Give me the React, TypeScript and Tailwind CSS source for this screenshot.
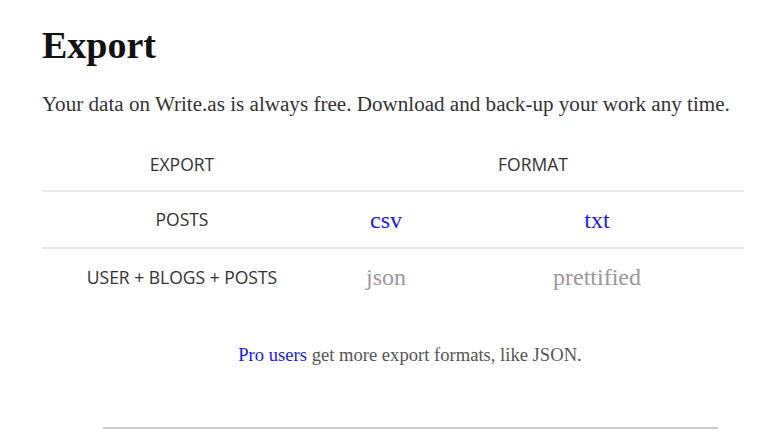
import React from "react";

export default function App() {
  const serif = { fontFamily: '"Liberation Serif", "DejaVu Serif", serif' };
  const sans = { fontFamily: '"Open Sans", "Noto Sans", sans-serif' };
  return (
    <div className="bg-white h-[441px] w-[768px] overflow-hidden flex flex-col" style={serif}>
      <div className="pl-[42px] pr-[24px]">
        <h1 className="pt-[22px] text-[38px] font-bold leading-[46px] text-[#111]">Export</h1>
        <p className="mt-[22px] text-[21.1px] leading-[28px] text-[#333] whitespace-nowrap">
          Your data on Write.as is always free. Download and back-up your work any time.
        </p>
        <table className="mt-[20px] w-[702px] border-collapse">
          <thead>
            <tr className="border-b-2 border-[#e8e8e8]">
              <th className="w-[280px] h-[53px] font-normal text-[17.5px] text-[#333] uppercase" style={sans}>Export</th>
              <th colSpan={2} className="h-[53px] font-normal text-[17.5px] text-[#333] uppercase" style={sans}>Format</th>
            </tr>
          </thead>
          <tbody>
            <tr className="border-b-2 border-[#e8e8e8]">
              <td className="h-[57px] text-center text-[17.5px] text-[#333]" style={sans}>POSTS</td>
              <td className="w-[128px] text-center text-[24px] text-[#1a1aee]">csv</td>
              <td className="text-center text-[24px] text-[#1a1aee]">txt</td>
            </tr>
            <tr>
              <td className="h-[57px] text-center text-[17.5px] text-[#333]" style={sans}>USER + BLOGS + POSTS</td>
              <td className="text-center text-[24px] text-[#999]">json</td>
              <td className="text-center text-[24px] text-[#999]">prettified</td>
            </tr>
          </tbody>
        </table>
        <p className="mt-[36px] text-center text-[18.6px] text-[#555] pl-[34px]">
          <a className="text-[#1a1aee]">Pro users</a> get more export formats, like JSON.
        </p>
      </div>
      <div className="mt-[58px] ml-[103px] w-[615px] border-t-2 border-[#ccc]" />
    </div>
  );
}
